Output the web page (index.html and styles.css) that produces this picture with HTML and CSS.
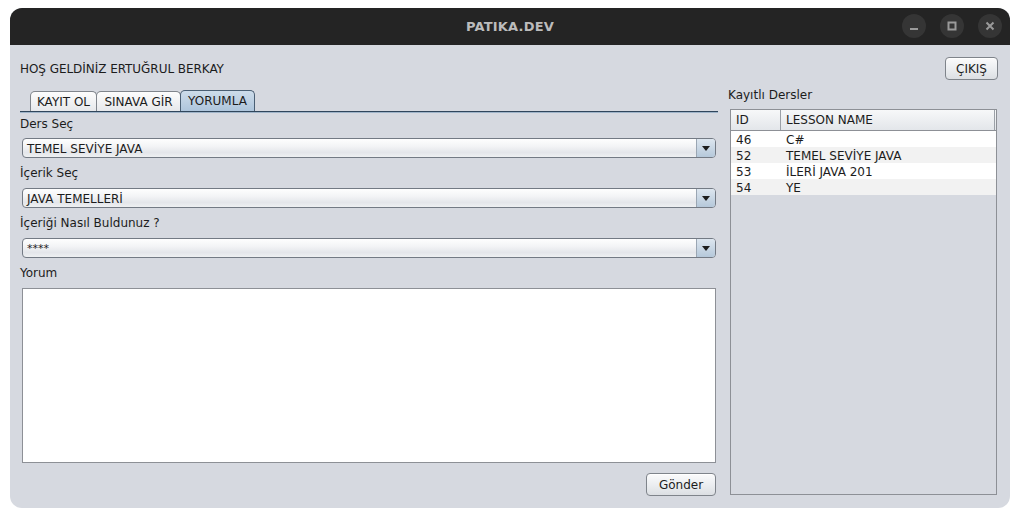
FILE: index.html
```html
<!DOCTYPE html>
<html lang="tr">
<head>
<meta charset="utf-8">
<title>PATIKA.DEV</title>
<link rel="stylesheet" href="styles.css">
</head>
<body>
<div class="window">
  <div class="titlebar">
    <div class="title">PATIKA.DEV</div>
    <div class="controls">
      <span class="ctl"><svg width="12" height="12" viewBox="0 0 12 12"><rect x="2" y="8" width="8" height="2" fill="#9a9a9a"/></svg></span>
      <span class="ctl"><svg width="12" height="12" viewBox="0 0 12 12"><rect x="2.5" y="2.5" width="7" height="7" fill="none" stroke="#9a9a9a" stroke-width="2"/></svg></span>
      <span class="ctl"><svg width="12" height="12" viewBox="0 0 12 12"><path d="M2.5 2.5 L9.5 9.5 M9.5 2.5 L2.5 9.5" stroke="#9a9a9a" stroke-width="2"/></svg></span>
    </div>
  </div>
  <div class="content">
    <div class="toprow">
      <div class="greeting">HOŞ GELDİNİZ ERTUĞRUL BERKAY</div>
      <button class="btn btn-exit">ÇIKIŞ</button>
    </div>
    <div class="main">
      <div class="left">
        <div class="tabs">
          <div class="tab tab-a">KAYIT OL</div>
          <div class="tab tab-b">SINAVA GİR</div>
          <div class="tab tab-c active">YORUMLA</div>
        </div>
        <div class="tabline"></div>
        <div class="label first">Ders Seç</div>
        <div class="combo"><span class="combo-text">TEMEL SEVİYE JAVA</span><span class="combo-arrow"></span></div>
        <div class="label">İçerik Seç</div>
        <div class="combo"><span class="combo-text">JAVA TEMELLERİ</span><span class="combo-arrow"></span></div>
        <div class="label">İçeriği Nasıl Buldunuz ?</div>
        <div class="combo"><span class="combo-text stars">****</span><span class="combo-arrow"></span></div>
        <div class="label">Yorum</div>
        <div class="textarea"></div>
        <div class="sendrow"><button class="btn btn-send">Gönder</button></div>
      </div>
      <div class="right">
        <div class="rlabel">Kayıtlı Dersler</div>
        <div class="pane">
          <div class="thead">
            <div class="th th-id">ID</div>
            <div class="th th-name">LESSON NAME</div>
          </div>
          <div class="tr"><div class="td td-id">46</div><div class="td">C#</div></div>
          <div class="tr alt"><div class="td td-id">52</div><div class="td">TEMEL SEVİYE JAVA</div></div>
          <div class="tr"><div class="td td-id">53</div><div class="td">İLERİ JAVA 201</div></div>
          <div class="tr alt"><div class="td td-id">54</div><div class="td">YE</div></div>
        </div>
      </div>
    </div>
  </div>
</div>
</body>
</html>
```

FILE: styles.css
```css
html, body {
  margin: 0;
  padding: 0;
  background: #ffffff;
}
body {
  font-family: "DejaVu Sans", sans-serif;
  font-size: 12px;
  color: #1c1c1c;
}
.window {
  margin: 8px 10px;
  width: 1000px;
  height: 500px;
  border-radius: 12px;
  overflow: hidden;
  background: #d6d9e0;
  display: flex;
  flex-direction: column;
}
.titlebar {
  height: 37px;
  background: #242424;
  display: flex;
  align-items: center;
  justify-content: center;
  position: relative;
}
.title {
  font-family: "DejaVu Sans", sans-serif;
  font-weight: bold;
  font-size: 13px;
  color: #bcbcbc;
  letter-spacing: 0.2px;
}
.controls {
  position: absolute;
  right: 8px;
  top: 6px;
  display: flex;
  gap: 14px;
}
.ctl {
  width: 24px;
  height: 24px;
  border-radius: 50%;
  background: #353535;
  display: flex;
  align-items: center;
  justify-content: center;
}
.content {
  flex: 1;
  display: flex;
  flex-direction: column;
  padding: 12px 12px 0 10px;
}
.toprow {
  display: flex;
  align-items: center;
  justify-content: space-between;
  height: 23px;
}
.greeting {
  font-size: 12px;
  letter-spacing: -0.05px;
}
.btn {
  font-family: "DejaVu Sans", sans-serif;
  font-size: 12px;
  color: #1c1c1c;
  height: 23px;
  border: 1px solid #7f848b;
  border-radius: 4px;
  background: linear-gradient(#fbfbfc 0%, #eceef1 50%, #dcdfe3 100%);
  padding: 0;
  box-shadow: inset 0 1px 0 #ffffff;
}
.btn-exit {
  width: 53px;
}
.main {
  display: flex;
  gap: 10px;
  margin-top: 6px;
}
.left {
  width: 698px;
  display: flex;
  flex-direction: column;
}
.tabs {
  display: flex;
  margin-top: 4px;
  padding-left: 10px;
  height: 21px;
}
.tab {
  height: 20px;
  box-sizing: border-box;
  border: 1px solid #80858c;
  border-bottom: none;
  border-radius: 5px 5px 0 0;
  background: linear-gradient(#fdfdfd, #e6e8eb);
  text-align: center;
  line-height: 20px;
  margin-top: 1px;
}
.tab-a { width: 67px; }
.tab-b { width: 85px; }
.tab-c { width: 75px; }
.tab + .tab {
  margin-left: -1px;
}
.tab.active {
  background: linear-gradient(#cddcea, #aec5dc);
  border-color: #4a5f74;
  height: 21px;
  margin-top: 0;
  line-height: 21px;
}
.tabline {
  height: 1px;
  background: #30465c;
  border-bottom: 1px solid #9fb4c9;
}
.label {
  line-height: 20px;
  padding-bottom: 5px;
  margin-top: 5px;
}
.label.first {
  margin-top: 0;
  line-height: 22px;
  padding-bottom: 3px;
}
.combo {
  margin: 0 2px;
  height: 20px;
  box-sizing: border-box;
  border: 1px solid #737a84;
  border-radius: 4px;
  background: linear-gradient(#fefefe 0%, #f3f4f6 40%, #e4e6ea 75%, #eef0f2 100%);
  display: flex;
  align-items: center;
  overflow: hidden;
}
.combo-text {
  flex: 1;
  padding-left: 4px;
  padding-top: 1px;
  font-size: 12px;
}
.combo-text.stars {
  font-size: 11px;
}
.combo-arrow {
  width: 18px;
  height: 100%;
  border-left: 1px solid #9aa6b3;
  background: linear-gradient(#dde6ef, #b5c8da);
  position: relative;
}
.combo-arrow::after {
  content: "";
  position: absolute;
  left: 5px;
  top: 7px;
  border-left: 4px solid transparent;
  border-right: 4px solid transparent;
  border-top: 5px solid #1c1c1c;
}
.textarea {
  margin: 0 2px;
  height: 175px;
  box-sizing: border-box;
  border: 1px solid #8d9096;
  background: #ffffff;
}
.sendrow {
  display: flex;
  justify-content: flex-end;
  margin-top: 10px;
  padding-right: 2px;
}
.btn-send {
  width: 70px;
}
.right {
  width: 270px;
  display: flex;
  flex-direction: column;
}
.rlabel {
  height: 23px;
  line-height: 18px;
}
.pane {
  margin-left: 2px;
  width: 267px;
  height: 386px;
  box-sizing: border-box;
  border: 1px solid #8d9096;
  background: #d6d9e0;
}
.thead {
  display: flex;
  height: 21px;
  box-sizing: border-box;
  background: linear-gradient(#f7f8f9, #e3e6ea);
  border-bottom: 1px solid #8d9096;
}
.th {
  line-height: 20px;
  padding-left: 5px;
  box-sizing: border-box;
}
.th-id {
  width: 50px;
  border-right: 1px solid #9ba0a7;
}
.th-name {
  flex: 1;
  border-right: 1px solid #9ba0a7;
  margin-right: 1px;
}
.tr {
  display: flex;
  height: 16px;
  background: #ffffff;
}
.tr.alt {
  background: #f2f2f2;
}
.td {
  height: 16px;
  line-height: 18px;
  padding-left: 5px;
}
.td-id {
  width: 50px;
  box-sizing: border-box;
}
```
